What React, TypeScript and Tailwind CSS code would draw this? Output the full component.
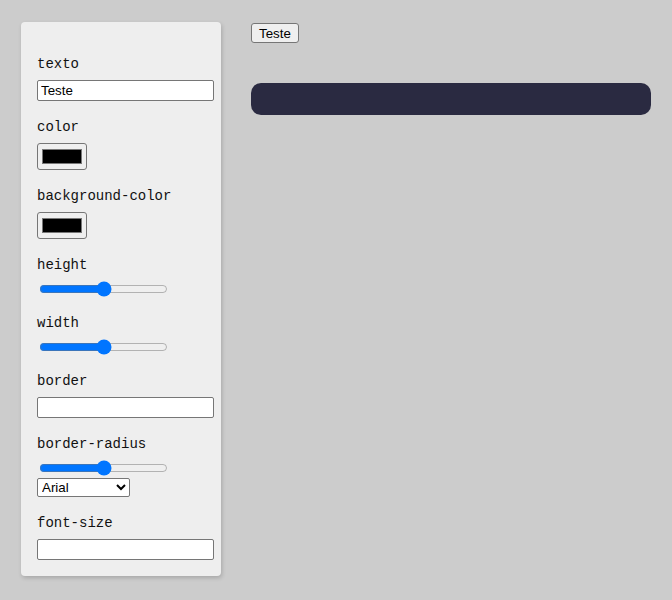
import { useState } from 'react';

const LABEL = 'block mt-[18px] mb-[7px] text-[14px] leading-[17px] text-[#111] font-["Liberation_Mono",monospace]';
const TEXT_INPUT =
  'block w-[177px] h-[21px] border border-[#767676] rounded-[2px] bg-white px-[3px] text-[13.33px] leading-[17px] text-black font-["Liberation_Sans",Arial,sans-serif]';
const COLOR_INPUT =
  'block w-[50px] h-[27px] border border-[#767676] rounded-[3px] bg-[#efefef] px-[2px] py-[1px] cursor-pointer';
const RANGE = 'block w-[129px] h-4 mx-[2px] accent-[#0075ff]';

export default function App() {
  const [texto, setTexto] = useState('Teste');
  const [color, setColor] = useState('#000000');
  const [bg, setBg] = useState('#000000');
  const [height, setHeight] = useState(50);
  const [width, setWidth] = useState(50);
  const [border, setBorder] = useState('');
  const [radius, setRadius] = useState(50);
  const [font, setFont] = useState('Arial');
  const [fontSize, setFontSize] = useState('');

  return (
    <div className="min-h-[600px] bg-[#cccccc] flex items-start gap-[30px] pt-[22px] pl-[21px]">
      <div className="w-[200px] bg-[#eeeeee] rounded-[4px] shadow-[1px_2px_4px_rgba(0,0,0,0.18)] px-4 pb-4 pt-4">
        <label className={LABEL}>texto</label>
        <input type="text" className={TEXT_INPUT} value={texto} onChange={(e) => setTexto(e.target.value)} />

        <label className={LABEL}>color</label>
        <input type="color" className={COLOR_INPUT} value={color} onChange={(e) => setColor(e.target.value)} />

        <label className={LABEL}>background-color</label>
        <input type="color" className={COLOR_INPUT} value={bg} onChange={(e) => setBg(e.target.value)} />

        <label className={LABEL}>height</label>
        <input type="range" className={RANGE} value={height} onChange={(e) => setHeight(+e.target.value)} />

        <label className={LABEL}>width</label>
        <input type="range" className={RANGE} value={width} onChange={(e) => setWidth(+e.target.value)} />

        <label className={LABEL}>border</label>
        <input type="text" className={TEXT_INPUT} value={border} onChange={(e) => setBorder(e.target.value)} />

        <label className={LABEL}>border-radius</label>
        <input type="range" className={RANGE} value={radius} onChange={(e) => setRadius(+e.target.value)} />
        <select
          className="block mt-[2px] w-[93px] h-[19px] border border-[#767676] rounded-[2px] bg-white text-[13.33px] text-black font-['Liberation_Sans',Arial,sans-serif]"
          value={font}
          onChange={(e) => setFont(e.target.value)}
        >
          <option>Arial</option>
          <option>Verdana</option>
          <option>Tahoma</option>
          <option>Georgia</option>
        </select>

        <label className={LABEL}>font-size</label>
        <input type="text" className={TEXT_INPUT} value={fontSize} onChange={(e) => setFontSize(e.target.value)} />
      </div>

      <div className="pt-[1px]">
        <button className="block h-[20px] border border-[#767676] rounded-[3px] bg-[#efefef] px-[7px] text-[13.33px] leading-[15px] text-black font-['Liberation_Sans',Arial,sans-serif]">
          {texto}
        </button>
        <div className="mt-[40px] w-[400px] h-[32px] rounded-[10px] bg-[#2a2a41]" />
      </div>
    </div>
  );
}
